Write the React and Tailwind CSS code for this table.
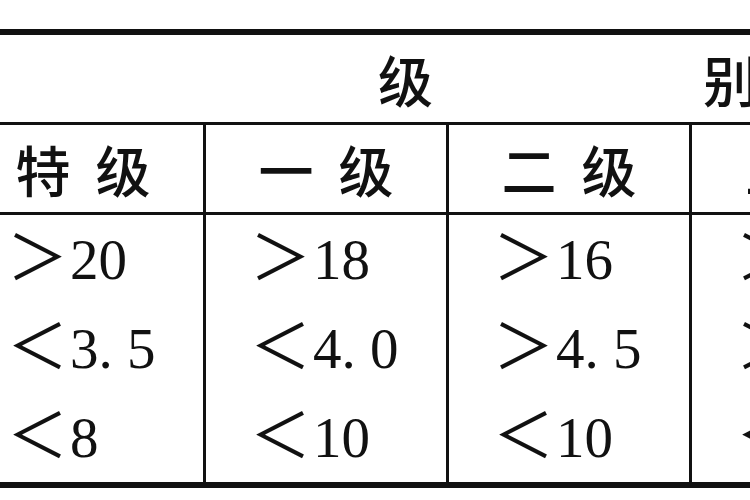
export default function App() {
  const cjk = { fontFamily: "'Noto Sans CJK SC', sans-serif" };
  const num = { fontFamily: "'Liberation Serif', 'Noto Sans CJK SC', serif" };
  const heads = [
    ["特", "级"],
    ["一", "级"],
    ["二", "级"],
    ["三", "级"],
  ];
  const rows = [
    [["＞", "20"], ["＞", "18"], ["＞", "16"], ["＞", "14"]],
    [["＜", "3. 5"], ["＜", "4. 0"], ["＞", "4. 5"], ["＞", "5. 0"]],
    [["＜", "8"], ["＜", "10"], ["＜", "10"], ["＜", "12"]],
  ];
  return (
    <div className="w-[750px] h-[500px] overflow-hidden bg-white text-[#111] pt-[29px]">
      <div className="ml-[-37px] w-[980px]">
        <div className="h-[6px] bg-[#111]" />
        <div className="h-[87px] flex items-center pl-[415px] gap-[270px] text-[55px] leading-none font-medium" style={cjk}>
          <span>级</span>
          <span>别</span>
        </div>
        <div className="h-[3px] bg-[#111]" />
        <div className="flex h-[87px]">
          {heads.map((h, i) => (
            <div
              key={i}
              className="w-[243px] shrink-0 border-r-[3px] border-[#111] flex items-center justify-center gap-[25px] text-[55px] leading-none font-medium"
              style={cjk}
            >
              <span>{h[0]}</span>
              <span>{h[1]}</span>
            </div>
          ))}
        </div>
        <div className="h-[3px] bg-[#111]" />
        <div className="flex">
          {[0, 1, 2, 3].map((c) => (
            <div key={c} className="w-[243px] shrink-0 border-r-[3px] border-[#111] flex flex-col">
              {rows.map((r, j) => (
                <div key={j} className="h-[89px] flex items-center pl-[44px] leading-none" style={num}>
                  <span className="text-[61px]">{r[c][0]}</span>
                  <span className="text-[57px] ml-[2px]">{r[c][1]}</span>
                </div>
              ))}
            </div>
          ))}
        </div>
        <div className="h-[6px] bg-[#111]" />
      </div>
    </div>
  );
}
